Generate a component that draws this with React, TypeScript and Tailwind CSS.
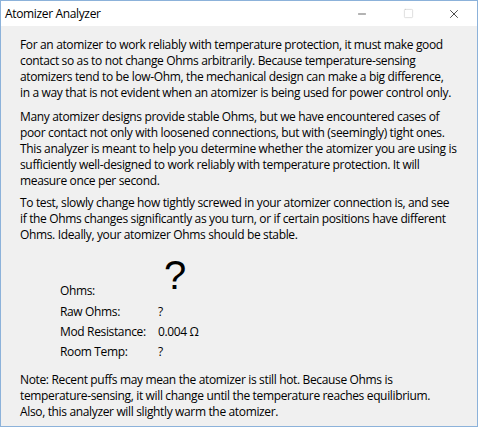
import { Minus, Square, X } from "lucide-react"

const intro = [
  "For an atomizer to work reliably with temperature protection, it must make good",
  "contact so as to not change Ohms arbitrarily. Because temperature-sensing",
  "atomizers tend to be low-Ohm, the mechanical design can make a big difference,",
  "in a way that is not evident when an atomizer is being used for power control only.",
]

const contact = [
  "Many atomizer designs provide stable Ohms, but we have encountered cases of",
  "poor contact not only with loosened connections, but with (seemingly) tight ones.",
  "This analyzer is meant to help you determine whether the atomizer you are using is",
  "sufficiently well-designed to work reliably with temperature protection. It will",
  "measure once per second.",
]

const howTo = [
  "To test, slowly change how tightly screwed in your atomizer connection is, and see",
  "if the Ohms changes significantly as you turn, or if certain positions have different",
  "Ohms. Ideally, your atomizer Ohms should be stable.",
]

const note = [
  "Note: Recent puffs may mean the atomizer is still hot. Because Ohms is",
  "temperature-sensing, it will change until the temperature reaches equilibrium.",
  "Also, this analyzer will slightly warm the atomizer.",
]

const readings = [
  { label: "Raw Ohms:", value: "?" },
  { label: "Mod Resistance:", value: "0.004 Ω" },
  { label: "Room Temp:", value: "?" },
]

function Para({ lines, className = "" }: { lines: string[]; className?: string }) {
  return (
    <div className={className}>
      {lines.map((l, i) => (
        <div key={i} className="whitespace-nowrap h-[16px] leading-[16px]">
          {l}
        </div>
      ))}
    </div>
  )
}

export default function App() {
  return (
    <div className="w-[478px] h-[427px] border border-[#8cb2da] bg-[#f0f0f0] flex flex-col font-['Segoe_UI','Open_Sans',sans-serif] text-[12px] text-black tracking-[-0.35px]">
      {/* title bar */}
      <div className="h-[25px] bg-white flex items-center shrink-0">
        <span className="pl-[4px] flex-1">Atomizer Analyzer</span>
        <div className="flex h-full">
          <div className="w-[46px] flex items-center justify-center">
            <Minus className="w-[12px] h-[12px]" strokeWidth={1.2} />
          </div>
          <div className="w-[46px] flex items-center justify-center text-[#c4c4c4]">
            <Square className="w-[11px] h-[11px]" strokeWidth={1.2} />
          </div>
          <div className="w-[46px] flex items-center justify-center">
            <X className="w-[14px] h-[14px]" strokeWidth={1.2} />
          </div>
        </div>
      </div>

      {/* body */}
      <div className="flex-1 pl-[19px] pt-[11px]">
        <Para lines={intro} />
        <Para lines={contact} className="mt-[8px]" />
        <Para lines={howTo} className="mt-[6px]" />

        <div className="mt-[9px] pl-[40px]">
          <div className="flex items-end h-[50px]">
            <span className="w-[98px] pb-[2px]">Ohms:</span>
            <span className="text-[40px] leading-[44px] font-['Liberation_Sans',sans-serif] pl-[6px] pb-[5px] tracking-normal">?</span>
          </div>
          {readings.map((r) => (
            <div key={r.label} className="flex h-[20px] items-center">
              <span className="w-[98px]">{r.label}</span>
              <span>{r.value}</span>
            </div>
          ))}
        </div>

        <Para lines={note} className="mt-[10px]" />
      </div>
    </div>
  )
}
